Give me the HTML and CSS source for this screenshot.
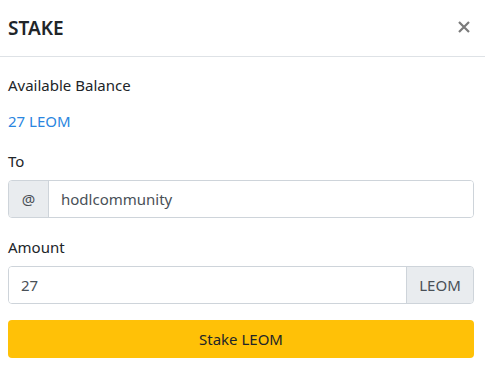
FILE: index.html
```html
<!DOCTYPE html>
<html>
<head>
<meta charset="utf-8">
<link rel="stylesheet" href="styles.css">
</head>
<body>
<div class="modal">
  <div class="modal-header">
    <h5 class="modal-title">STAKE</h5>
    <button class="close" type="button" aria-label="Close">
      <svg width="12" height="12" viewBox="0 0 12 12"><path d="M1 1L11 11M11 1L1 11" stroke="#7b7b7b" stroke-width="2.2" stroke-linecap="butt"/></svg>
    </button>
  </div>
  <div class="modal-body">
    <p class="label">Available Balance</p>
    <p class="balance">27 LEOM</p>
    <label class="field-label">To</label>
    <div class="input-group">
      <span class="addon addon-left">@</span>
      <span class="input">hodlcommunity</span>
    </div>
    <label class="field-label">Amount</label>
    <div class="input-group input-group-last">
      <span class="input">27</span>
      <span class="addon addon-right">LEOM</span>
    </div>
    <button class="btn-stake" type="button">Stake LEOM</button>
  </div>
</div>
</body>
</html>
```

FILE: styles.css
```css
* { box-sizing: border-box; }
html, body { margin: 0; padding: 0; background: #fff; }
body {
  font-family: "Noto Sans", "Open Sans", sans-serif;
  font-size: 15px;
  line-height: 24px;
  color: #212529;
}
.modal { width: 485px; }
.modal-header {
  height: 57px;
  display: flex;
  align-items: center;
  justify-content: space-between;
  padding: 0 15px 1px 8px;
  border-bottom: 1px solid #dee2e6;
}
.modal-title {
  margin: 0;
  font-size: 19px;
  font-weight: 600;
  line-height: 24px;
  color: #212529;
}
.close {
  border: 0;
  background: none;
  padding: 0;
  display: flex;
  margin-top: -1px;
}
.modal-body {
  display: flex;
  flex-direction: column;
  padding: 16px 11px 14px 8px;
}
.label { margin: 0 0 12px; }
.balance { margin: 0 0 16px; color: #2a86e0; }
.field-label { display: block; margin: 0 0 7px; }
.input-group {
  display: flex;
  height: 38px;
  border: 1px solid #ced4da;
  border-radius: 4px;
  overflow: hidden;
  margin-bottom: 17px;
}
.input-group-last { margin-bottom: 16px; }
.input {
  flex: 1;
  display: flex;
  align-items: center;
  padding: 0 12px;
  color: #495057;
  background: #fff;
}
.addon {
  display: flex;
  align-items: center;
  padding: 0 12px;
  background: #e9ecef;
  color: #495057;
}
.addon-left { border-right: 1px solid #ced4da; width: 40px; justify-content: center; }
.addon-right { border-left: 1px solid #ced4da; width: 67px; justify-content: center; }
.btn-stake {
  height: 38px;
  border: 0;
  border-radius: 4px;
  background: #ffc107;
  color: #212529;
  font-family: inherit;
  font-size: 15px;
  line-height: 24px;
}
```
